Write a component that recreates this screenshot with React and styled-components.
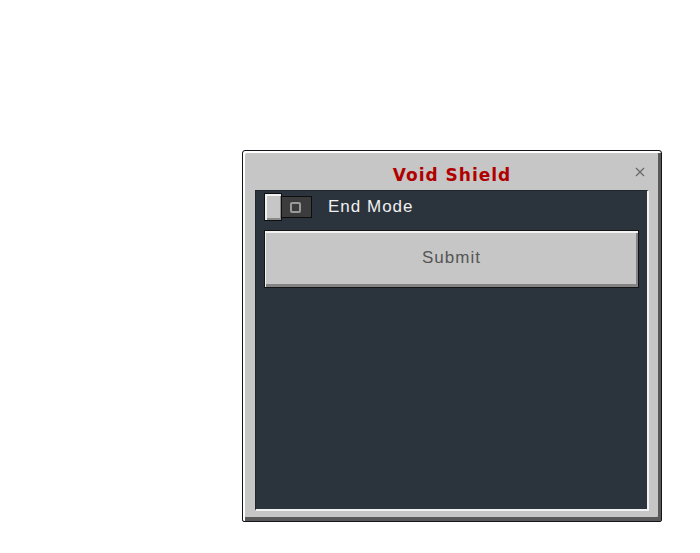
import React, { useState } from "react";
import styled, { createGlobalStyle } from "styled-components";

const Global = createGlobalStyle`
  html, body { margin: 0; padding: 0; background: #ffffff; }
  body { font-family: "Liberation Sans", Arial, sans-serif; }
`;

const Page = styled.div`
  width: 700px;
  height: 553px;
  padding: 150px 0 0 242px;
  box-sizing: border-box;
`;

const Window = styled.div`
  width: 420px;
  height: 372px;
  box-sizing: border-box;
  border: 1px solid #111418;
  border-radius: 3px 3px 2px 2px;
  background: #c6c6c6;
  box-shadow: inset 2px 2px 0 #ffffff, inset -3px -4px 0 #595959;
  display: flex;
  flex-direction: column;
  padding: 0 12px 10px 12px;
`;

const TitleBar = styled.div`
  height: 39px;
  flex: none;
  display: grid;
  grid-template-columns: 30px 1fr 30px;
  align-items: center;
  padding-top: 8px;
  box-sizing: border-box;
`;

const Title = styled.h1`
  grid-column: 2;
  margin: 0;
  text-align: center;
  font-family: "DejaVu Sans", "Liberation Sans", sans-serif;
  font-weight: 700;
  font-size: 17px;
  letter-spacing: 1px;
  color: #b00000;
  line-height: 20px;
`;

const Close = styled.button`
  grid-column: 3;
  justify-self: end;
  margin-right: 2px;
  margin-top: -6px;
  width: 14px;
  height: 14px;
  padding: 0;
  border: 0;
  background: transparent;
  display: flex;
  align-items: center;
  justify-content: center;
  cursor: pointer;
`;

const Panel = styled.div`
  flex: 1;
  background: #2b333c;
  border-top: 1px solid #20262d;
  border-left: 1px solid #20262d;
  border-right: 2px solid #f2f2f2;
  border-bottom: 2px solid #f2f2f2;
  display: flex;
  flex-direction: column;
  gap: 9px;
  padding: 2px 8px 0 8px;
`;

const Row = styled.label`
  display: flex;
  align-items: center;
  height: 28px;
  gap: 16px;
  cursor: pointer;
`;

const Toggle = styled.span`
  display: flex;
  align-items: center;
`;

const Knob = styled.span`
  width: 18px;
  height: 28px;
  box-sizing: border-box;
  background: #c6c6c6;
  border: 1px solid #0e0e0e;
  box-shadow: inset 2px 2px 0 #f0f0f0, inset -1px -2px 0 #8b8b8b;
  position: relative;
  z-index: 1;
`;

const Track = styled.span`
  width: 31px;
  height: 22px;
  box-sizing: border-box;
  margin-left: -1px;
  background: #3c3c3c;
  border: 1px solid #0e0e0e;
  display: flex;
  align-items: center;
  justify-content: center;
  padding-right: 2px;
`;

const Ring = styled.span`
  width: 11px;
  height: 11px;
  box-sizing: border-box;
  border: 2px solid #9a9a9a;
  border-radius: 2px;
`;

const Label = styled.span`
  font-family: "Liberation Sans", Arial, sans-serif;
  font-size: 17px;
  letter-spacing: 1px;
  color: #f0f0f0;
`;

const Button = styled.button`
  height: 58px;
  flex: none;
  width: 100%;
  box-sizing: border-box;
  background: #c6c6c6;
  border: 1px solid #141414;
  box-shadow: inset 1px 2px 0 #f2f2f2, inset -2px -3px 0 #838383;
  font-family: "Liberation Sans", Arial, sans-serif;
  font-size: 17px;
  letter-spacing: 1px;
  color: #555555;
  cursor: pointer;
  padding: 0 0 2px 0;
`;

export default function App() {
  const [on, setOn] = useState(false);
  return (
    <Page>
      <Global />
      <Window>
        <TitleBar>
          <Title>Void Shield</Title>
          <Close aria-label="close">
            <svg width="10" height="10" viewBox="0 0 10 10">
              <path d="M1 1 L9 9 M9 1 L1 9" stroke="#6a6a6a" strokeWidth="1.3" fill="none" />
            </svg>
          </Close>
        </TitleBar>
        <Panel>
          <Row onClick={() => setOn(!on)}>
            <Toggle>
              <Knob />
              <Track>
                <Ring />
              </Track>
            </Toggle>
            <Label>End Mode</Label>
          </Row>
          <Button>Submit</Button>
        </Panel>
      </Window>
    </Page>
  );
}
